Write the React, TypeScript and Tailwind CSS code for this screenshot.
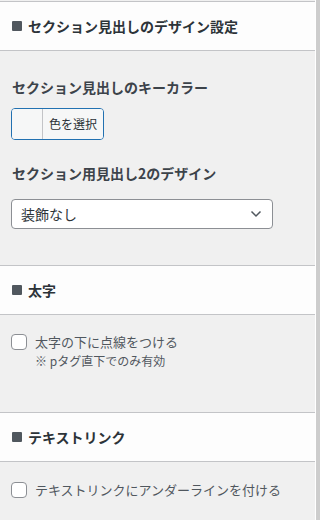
import React from 'react';

const jp = { fontFamily: '"Noto Sans CJK JP", "Noto Sans", sans-serif' };

function SectionHeader({ title }: { title: string }) {
  return (
    <div className="h-[50px] bg-[#fdfdfd] border-y border-[#c3c4c7] flex items-center pl-3">
      <span className="w-[10px] h-[10px] rounded-[1px] bg-[#50575e] mr-[6px] flex-shrink-0" />
      <span className="text-[14px] font-bold text-[#2c3338]">{title}</span>
    </div>
  );
}

function Check({ label, note }: { label: string; note?: boolean }) {
  return (
    <div className="flex items-start pl-[11px]">
      <span className="w-[16px] h-[16px] rounded-[4px] border border-[#8c8f94] bg-white flex-shrink-0" />
      <div className="ml-[8px] text-[13px] text-[#50575e] leading-[16px]">
        <div>{label}</div>
        {note && <div className="text-[12px] mt-[3px]">※ pタグ直下でのみ有効</div>}
      </div>
    </div>
  );
}

export default function App() {
  return (
    <div className="w-[320px] h-[520px] flex bg-white overflow-hidden" style={jp}>
      <div className="w-[315px] pt-[1px] bg-[#f0f0f0] flex flex-col">
        <SectionHeader title="セクション見出しのデザイン設定" />
        <div className="h-[214px] pt-[28px]">
          <div className="pl-3 text-[14px] font-bold text-[#3c434a] leading-[16px]">
            セクション見出しのキーカラー
          </div>
          <div className="ml-[11px] mt-[13px] w-[93px] h-[32px] rounded-[4px] border border-[#2271b1] flex overflow-hidden">
            <span className="w-[31px] bg-[#f6f7f7] border-r border-[#c3c4c7]" />
            <span className="flex-1 bg-[#f6f7f7] flex items-center justify-center text-[12px] text-[#2c3338]">色を選択</span>
          </div>
          <div className="pl-3 mt-[25px] text-[14px] font-bold text-[#3c434a] leading-[16px]">
            セクション用見出し2のデザイン
          </div>
          <div className="ml-[11px] mt-[18px] w-[262px] h-[30px] rounded-[4px] border border-[#8c8f94] bg-white flex items-center justify-between pl-[9px] pr-[10px]">
            <span className="text-[14px] text-[#2c3338]">装飾なし</span>
            <svg width="12" height="8" viewBox="0 0 12 8" fill="none">
              <path d="M1.5 1.5 L6 6 L10.5 1.5" stroke="#50575e" strokeWidth="1.5" />
            </svg>
          </div>
        </div>
        <SectionHeader title="太字" />
        <div className="h-[97px] pt-[19px]">
          <Check label="太字の下に点線をつける" note />
        </div>
        <SectionHeader title="テキストリンク" />
        <div className="pt-[20px] flex-1">
          <Check label="テキストリンクにアンダーラインを付ける" />
        </div>
      </div>
      <div className="w-px bg-white" />
      <div className="w-[4px] bg-[#cdcdcd]" />
    </div>
  );
}
